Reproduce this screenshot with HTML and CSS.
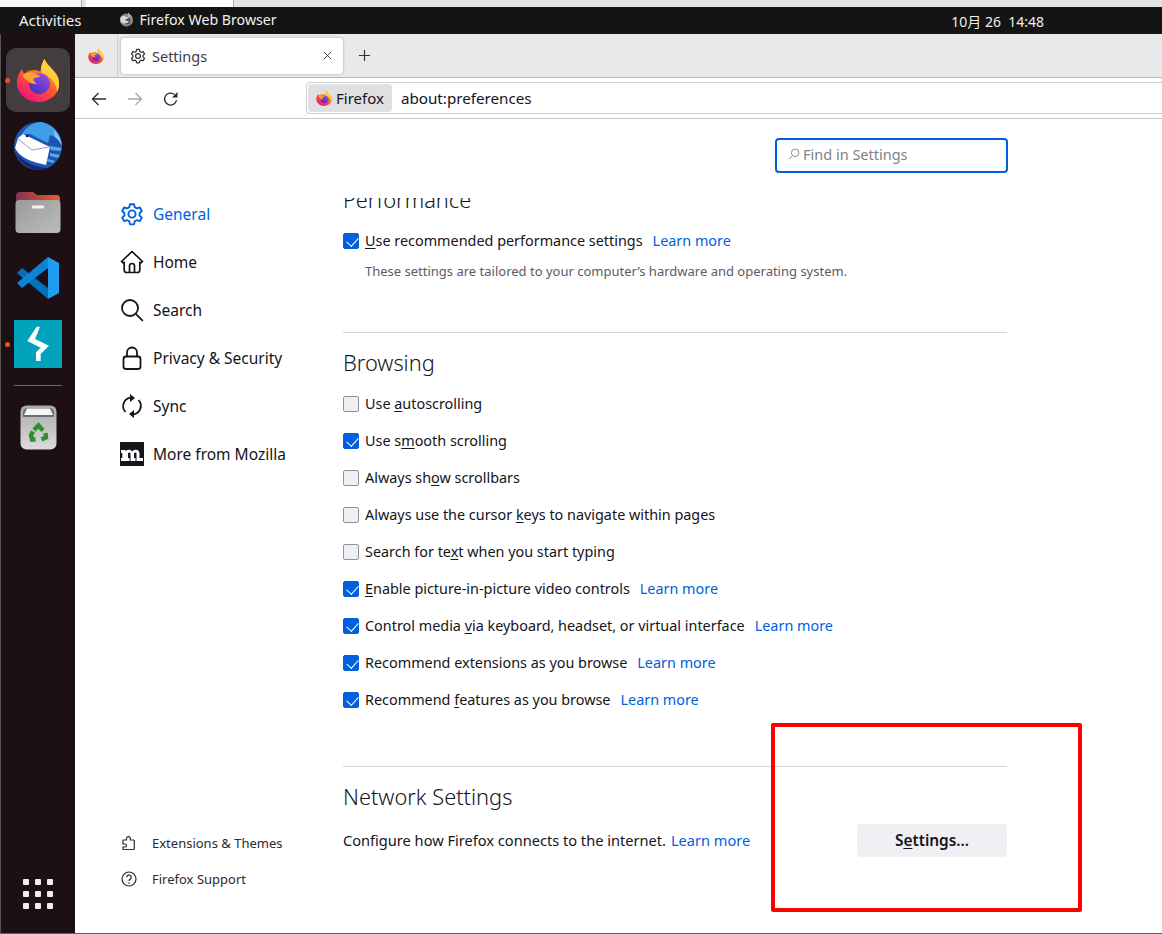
FILE: index.html
```html
<!DOCTYPE html>
<html lang="en">
<head>
<meta charset="utf-8">
<title>Settings</title>
<link rel="stylesheet" href="styles.css">
</head>
<body>
<svg class="defs" width="0" height="0" aria-hidden="true">
  <defs>
    <linearGradient id="fxBody" x1="0.8" y1="0.1" x2="0.25" y2="0.95">
      <stop offset="0" stop-color="#ffb325"/><stop offset="0.5" stop-color="#ff5a2c"/><stop offset="1" stop-color="#f0127c"/>
    </linearGradient>
    <linearGradient id="fxGlobe" x1="0.8" y1="0" x2="0.2" y2="1">
      <stop offset="0" stop-color="#a04be8"/><stop offset="1" stop-color="#3f2fb8"/>
    </linearGradient>
    <linearGradient id="folderTop" x1="0" y1="0" x2="1" y2="0">
      <stop offset="0" stop-color="#84324f"/><stop offset="1" stop-color="#e0602a"/>
    </linearGradient>
    <linearGradient id="folderBody" x1="0" y1="0" x2="1" y2="1">
      <stop offset="0" stop-color="#9a9a9a"/><stop offset="1" stop-color="#bcbcbc"/>
    </linearGradient>
    <linearGradient id="trashBody" x1="0" y1="0" x2="0" y2="1">
      <stop offset="0" stop-color="#a9a9a9"/><stop offset="1" stop-color="#dcdcdc"/>
    </linearGradient>
    <symbol id="firefox" viewBox="0 0 48 48">
      <path fill="url(#fxBody)" d="M31 1c2 5 6 8 10 13 4 4 6 9 6 14 0 11-10 20-23 20C11 48 1 38 1 27c0-5 2-11 6-15 0 2 1 4 2 5 3-3 7-4 11-4 3 0 5 1 7 2 0-6 2-11 4-14z"/>
      <path fill="#ffcf3a" d="M31 1c2 5 6 8 10 13 4 4 6 9 6 14 0 3-1 6-2 9-1-9-6-15-13-19-2-1-4-2-5-3 0-6 2-11 4-14z"/>
      <circle cx="25.500" cy="28" r="11.500" fill="url(#fxGlobe)"/>
      <path fill="#ffa030" d="M7 19c3-3 8-4 12-3 3 1 5 3 8 3-2 2-5 2.500-8 3 0 3 2 5 4 6-5 1-9-1-11-4-2-1-4-3-5-5z"/>
    </symbol>
    <symbol id="gear" viewBox="0 0 24 24">
      <path fill="none" stroke="currentColor" stroke-width="1.900" stroke-linejoin="round" d="M10 2.200h4l.7 3 2.100 1.200 3-.9 2 3.500-2.200 2.100v2.400l2.200 2.100-2 3.500-3-.9-2.100 1.200-.7 3h-4l-.7-3-2.100-1.200-3 .9-2-3.500 2.200-2.100v-2.400L2.200 9l2-3.500 3 .9 2.100-1.200z"/>
      <circle cx="12" cy="12" r="3.600" fill="none" stroke="currentColor" stroke-width="1.900"/>
    </symbol>
  </defs>
</svg>

<div class="strip">
  <div class="strip-tab-a"></div>
  <div class="strip-tab-b"></div>
</div>

<header class="topbar">
  <span class="activities">Activities</span>
  <span class="appname">
    <svg class="app-ico" viewBox="0 0 16 16"><circle cx="8" cy="8.500" r="7" fill="#8c8c8c"/><path fill="#b5b5b5" d="M10 0c.5 2 2 3 3.500 4.500L9 6.500z"/><circle cx="8.500" cy="9.500" r="3.600" fill="#4a4a4a"/><path fill="#d8d8d8" d="M1.500 6c2-2 4-2 6-1 1 .6 2 1 3 .8-1 1.600-3 1.800-4 2.200 1 1.500 3 2 4.500 1.500C9 13 3.500 13 2 10 1.500 9 1.400 7.500 1.500 6z"/></svg>
    <span>Firefox Web Browser</span>
  </span>
  <span class="clock">10月 26&nbsp; 14:48</span>
</header>

<div class="desktop">
  <aside class="dock">
    <div class="dock-item dock-active">
      <span class="run-dot"></span>
      <svg class="dock-fx"><use href="#firefox"/></svg>
    </div>
    <div class="dock-item">
      <svg class="dock-ico" viewBox="0 0 48 48">
        <circle cx="24" cy="24" r="24" fill="#1c55b4"/>
        <path fill="#3f9ee6" d="M8 12C12 5 18 1 26 0c12 1 21 11 22 24-3-6-7-10-12-11l-2 8L16 12z"/>
        <path fill="#86c8f2" d="M40 8c4 4 7 10 8 16-2-4-4-7-7-9z"/>
        <path fill="#5fa8e6" d="M36 24l12 2-2 3-9-1zM36 31l10 2-2 3-8-2zM34 37l7 2-2 2-6-2z"/>
        <path fill="#16276e" d="M1 30c4 10 13 18 25 18 3 0 6-1 8-2-11 0-24-5-33-16z"/>
        <path fill="#fff" d="M4 16l5-4 27 13-4 18C18 40 6 36 1 26z"/>
        <path fill="none" stroke="#9a9ea8" stroke-width="1" d="M4 17l14 11 17-3"/>
        <circle cx="13" cy="14" r="1.300" fill="#12224f"/>
      </svg>
    </div>
    <div class="dock-item">
      <svg class="dock-ico files" viewBox="0 0 46 42">
        <path fill="url(#folderTop)" d="M1 5q0-4 4-4h13l4 3h20q3 0 3 4v10H1z"/>
        <rect x="0.500" y="9" width="45" height="33" rx="4" fill="url(#folderBody)"/>
        <rect x="17" y="14.500" width="12" height="3" rx="1" fill="#f2f2f2"/>
      </svg>
    </div>
    <div class="dock-item">
      <svg class="dock-ico vscode" viewBox="0 0 44 44">
        <path fill="#0071bd" d="M1 17l5-5 26 20v11z"/>
        <path fill="#0a84d6" d="M32 1v11L6 32l-5-5z"/>
        <path fill="#1f9cf0" d="M32 1l11 6v30l-11 6z"/>
      </svg>
    </div>
    <div class="dock-item">
      <span class="run-dot"></span>
      <svg class="dock-ico bolt" viewBox="0 0 48 48">
        <rect width="48" height="48" fill="#00a3bb"/>
        <path fill="#fff" d="M22.700 6.700H26L21 19l14 6.700-8.300 8.300v7H22v-8.700l4.700-4.600-13.400-6.700z"/>
      </svg>
    </div>
    <div class="dock-sep"></div>
    <div class="dock-item trash-item">
      <svg class="dock-trash" viewBox="0 0 37 45">
        <rect x="0.500" y="0.500" width="36" height="44" rx="6" fill="url(#trashBody)"/>
        <path fill="#6e6e6e" d="M3 8q0-5 5-5h21q5 0 5 5v4H3z"/>
        <path fill="#f5f5f5" d="M7 3.500h23l3 6.500H4z"/>
        <path fill="none" stroke="#2f8f2f" stroke-width="4.400" d="M14 25l4.500-4.500 4.500 5M25.500 28l.5 4.500-4.500 2M15.500 34.500H12l-1-4.500 2-3.500"/>
      </svg>
    </div>
    <div class="dock-grid">
      <i></i><i></i><i></i><i></i><i></i><i></i><i></i><i></i><i></i>
    </div>
  </aside>

  <main class="browser">
    <div class="tabbar">
      <div class="pinned"><svg class="fx16"><use href="#firefox"/></svg></div>
      <div class="tab">
        <svg class="tab-gear"><use href="#gear"/></svg>
        <span class="tab-title">Settings</span>
        <svg class="tab-close" viewBox="0 0 10 10"><path d="M1 1l8 8M9 1l-8 8" stroke="#444" stroke-width="1.100"/></svg>
      </div>
      <svg class="newtab" viewBox="0 0 14 14"><path d="M7 1v12M1 7h12" stroke="#333" stroke-width="1.300"/></svg>
    </div>

    <div class="toolbar">
      <svg class="nav-ico" viewBox="0 0 16 16"><path fill="none" stroke="#2b2a33" stroke-width="1.300" d="M15 8H1.500M7.500 2l-6 6 6 6"/></svg>
      <svg class="nav-ico dim" viewBox="0 0 16 16"><path fill="none" stroke="#a8a8ac" stroke-width="1.300" d="M1 8h13.500M8.500 2l6 6-6 6"/></svg>
      <svg class="nav-ico" viewBox="0 0 16 16"><path fill="none" stroke="#2b2a33" stroke-width="1.300" d="M13.500 9a6 6 0 1 1-2-5.500"/><path fill="#2b2a33" d="M14.500 1v5.500H9z"/></svg>
      <div class="urlbar">
        <span class="identity"><svg class="fx16"><use href="#firefox"/></svg>Firefox</span>
        <span class="url">about:preferences</span>
      </div>
    </div>

    <div class="page">
      <nav class="side">
        <ul class="cats">
          <li class="cat selected"><svg class="cat-ico"><use href="#gear"/></svg>General</li>
          <li class="cat"><svg class="cat-ico" viewBox="0 0 24 24"><path fill="none" stroke="currentColor" stroke-width="1.700" stroke-linejoin="round" d="M1.500 11.500L12 1.500l10.500 10-2 1.500-.7-.7V20a2.500 2.500 0 0 1-2.500 2.500H6.700A2.500 2.500 0 0 1 4.200 20v-7.700l-.7.700zM9.500 22.500V16a2.500 2.500 0 0 1 5 0v6.500"/></svg>Home</li>
          <li class="cat"><svg class="cat-ico" viewBox="0 0 24 24"><circle cx="10" cy="10" r="8" fill="none" stroke="currentColor" stroke-width="1.800"/><path d="M15.800 15.800l7 7" stroke="currentColor" stroke-width="1.800"/></svg>Search</li>
          <li class="cat"><svg class="cat-ico" viewBox="0 0 24 24"><rect x="3.500" y="10.500" width="17" height="12.500" rx="2.500" fill="none" stroke="currentColor" stroke-width="1.800"/><path fill="none" stroke="currentColor" stroke-width="1.800" d="M7 10.500V6.500a5 5 0 0 1 10 0v4"/></svg>Privacy &amp; Security</li>
          <li class="cat"><svg class="cat-ico" viewBox="0 0 24 24"><path fill="none" stroke="currentColor" stroke-width="1.800" d="M5.500 18A8.500 8.500 0 0 1 11 3.700M18.500 6A8.500 8.500 0 0 1 13 20.300"/><path fill="currentColor" d="M10 0l5 4-5 4zM14 16l-5 4 5 4z"/></svg>Sync</li>
          <li class="cat"><svg class="cat-ico" viewBox="0 0 24 24"><rect width="24" height="24" fill="#15141a"/><path fill="#fff" d="M1 8h4.500v1.200C6.500 8.200 7.800 7.700 9 7.700c1.300 0 2.400.6 3 1.700 1.100-1.100 2.500-1.700 3.800-1.700 2.300 0 3.700 1.400 3.700 3.800V16H23v3h-6.500v-7c0-.9-.4-1.400-1.100-1.400-.5 0-1 .2-1.400.6V16h1.500v3h-5v-7c0-.9-.4-1.400-1.100-1.400-.5 0-1 .2-1.400.6V16H9.500v3H1v-3h1.300v-5H1z"/></svg>More from Mozilla</li>
        </ul>
        <ul class="links">
          <li class="link"><svg class="link-ico" viewBox="0 0 16 16"><path fill="none" stroke="currentColor" stroke-width="1.200" stroke-linejoin="round" d="M2 5h3.500V3.500a2 2 0 0 1 2-1.800c1 0 1.800 1 1.800 1.800V5h3a1 1 0 0 1 1 1v7.500a1 1 0 0 1-1 1H2V12h2a1.300 1.300 0 0 0 0-3H2z"/></svg>Extensions &amp; Themes</li>
          <li class="link"><svg class="link-ico" viewBox="0 0 16 16"><circle cx="8" cy="8" r="7" fill="none" stroke="currentColor" stroke-width="1.200"/><path fill="none" stroke="currentColor" stroke-width="1.200" d="M5.800 6.300a2.200 2.200 0 1 1 3.400 1.800c-.8.500-1.200 1-1.200 1.900"/><circle cx="8" cy="12" r=".8" fill="currentColor"/></svg>Firefox Support</li>
        </ul>
      </nav>

      <section class="content">
        <div class="search-row">
          <div class="search">
            <svg class="search-ico" viewBox="0 0 12 12"><circle cx="7.200" cy="4.800" r="3.800" fill="none" stroke="#8f8f9d" stroke-width="1"/><path d="M4.500 7.500L1 11" stroke="#8f8f9d" stroke-width="1"/></svg>
            <span>Find in Settings</span>
          </div>
        </div>
        <div class="scroller">
          <h2 class="clipped">Performance</h2>
          <label class="row"><span class="cb on"></span><span><u>U</u>se recommended performance settings</span><a class="more">Learn more</a></label>
          <p class="note">These settings are tailored to your computer’s hardware and operating system.</p>
          <hr class="sep first-sep">
          <h2>Browsing</h2>
          <div class="rows">
            <label class="row"><span class="cb"></span><span>Use <u>a</u>utoscrolling</span></label>
            <label class="row"><span class="cb on"></span><span>Use s<u>m</u>ooth scrolling</span></label>
            <label class="row"><span class="cb"></span><span>Always sh<u>o</u>w scrollbars</span></label>
            <label class="row"><span class="cb"></span><span>Always use the cursor <u>k</u>eys to navigate within pages</span></label>
            <label class="row"><span class="cb"></span><span>Search for te<u>x</u>t when you start typing</span></label>
            <label class="row"><span class="cb on"></span><span><u>E</u>nable picture-in-picture video controls</span><a class="more">Learn more</a></label>
            <label class="row"><span class="cb on"></span><span>Control media <u>v</u>ia keyboard, headset, or virtual interface</span><a class="more">Learn more</a></label>
            <label class="row"><span class="cb on"></span><span>Recommend extensions as you browse</span><a class="more">Learn more</a></label>
            <label class="row"><span class="cb on"></span><span>Recommend <u>f</u>eatures as you browse</span><a class="more">Learn more</a></label>
          </div>
          <hr class="sep net-sep">
          <h2>Network Settings</h2>
          <div class="net">
            <span class="net-text">Configure how Firefox connects to the internet.<a class="more net-more">Learn more</a></span>
            <button class="btn" type="button">S<u>e</u>ttings…</button>
          </div>
        </div>
      </section>
    </div>
  </main>
</div>
<div class="annotation"></div>
</body>
</html>
```
FILE: styles.css
```css
* { box-sizing: border-box; }
html, body { margin: 0; height: 100%; }
body {
  width: 1162px; height: 934px; overflow: hidden; position: relative;
  display: flex; flex-direction: column;
  background: #fff; color: #15141a;
  font-family: "Noto Sans", "Noto Sans CJK SC", sans-serif; font-size: 15px;
}
.defs { position: absolute; }
ul { list-style: none; margin: 0; padding: 0; }
u { text-underline-offset: 2px; text-decoration-thickness: 1px; }

.strip { height: 7px; background: #e4e4e7; display: flex; flex: none; }
.strip-tab-a { width: 82px; background: #f6f6f6; border-right: 1px solid #aaa; }
.strip-tab-b { width: 148px; margin-left: 4px; background: #fff; border-right: 1px solid #aaa; }

.topbar {
  height: 27px; flex: none; background: #141414; color: #f0f0f0;
  display: flex; align-items: center; font-size: 14.200px; position: relative;
}
.activities { margin: 0 0 2px 19px; font-size: 15px; }
.appname { margin: 0 0 2px 37px; display: flex; align-items: center; gap: 6px; }
.app-ico { width: 15px; height: 15px; }
.clock { margin-left: auto; margin-right: 118px; font-size: 14px; }

.desktop { flex: 1; display: flex; min-height: 0; border-left: 1px solid #555; border-bottom: 1px solid #5e5e5e; }

.dock {
  width: 74px; flex: none; background: #1d1015;
  display: flex; flex-direction: column; align-items: center; padding-top: 14px;
}
.dock-item { width: 64px; height: 64px; display: flex; align-items: center; justify-content: center; position: relative; border-radius: 10px; margin-bottom: 2px; flex: none; }
.dock-active { background: #443d40; }
.run-dot { position: absolute; left: -1px; top: 30px; width: 5px; height: 5px; border-radius: 50%; background: #e95420; }
.dock-fx { width: 44px; height: 44px; }
.dock-ico { width: 48px; height: 48px; }
.files { width: 46px; height: 42px; }
.vscode { width: 44px; height: 44px; }
.dock-sep { width: 48px; height: 1px; background: #6b6468; margin: 7px 0 11px; flex: none; }
.trash-item { height: 60px; }
.dock-trash { width: 37px; height: 45px; }
.dock-grid { margin-top: auto; margin-bottom: 24px; display: grid; grid-template-columns: repeat(3, 6px); gap: 6px; }
.dock-grid i { width: 6px; height: 6px; background: #f0eef0; border-radius: 1px; }

.browser { flex: 1; min-width: 0; display: flex; flex-direction: column; }

.tabbar { height: 44px; flex: none; background: #e9e9eb; border-bottom: 1px solid #b5b5b5; display: flex; align-items: center; }
.pinned { width: 43px; height: 43px; border-right: 1px solid #cfcfd4; display: flex; align-items: center; justify-content: center; }
.fx16 { width: 16px; height: 16px; flex: none; }
.tab {
  margin-left: 3px; width: 222px; height: 36px; background: #fff; border-radius: 4px;
  box-shadow: 0 0 3px rgba(0,0,0,.25); display: flex; align-items: center; padding: 0 11px 0 9px; font-size: 14.500px;
}
.tab-gear { width: 16px; height: 16px; color: #333; flex: none; }
.tab-title { margin-left: 6px; flex: 1; color: #3d3d44; }
.tab-close { width: 9px; height: 9px; }
.newtab { width: 13px; height: 13px; margin-left: 15px; }

.toolbar { height: 41px; flex: none; background: #fff; border-bottom: 1px solid #c8c8c8; display: flex; align-items: center; padding-left: 16px; }
.nav-ico { width: 16px; height: 16px; margin: 2px 20px 0 0; flex: none; }
.nav-ico:nth-child(3) { margin-right: 0; }
.urlbar {
  margin-left: 127px; flex: 1; height: 32px; border: 1px solid #cfcfd4; border-right: 0; border-radius: 4px 0 0 4px;
  display: flex; align-items: center; font-size: 15px; padding-left: 1px;
}
.identity { background: #e0e0e2; height: 28px; border-radius: 4px; display: flex; align-items: center; gap: 4px; padding: 0 8px 0 8px; color: #15141a; }
.url { margin-left: 9px; color: #15141a; font-size: 15.200px; }

.page { flex: 1; min-height: 0; display: flex; }
.side { width: 268px; flex: none; display: flex; flex-direction: column; padding: 71px 0 0 45px; }
.cats { display: flex; flex-direction: column; }
.cat { height: 48px; display: flex; align-items: center; gap: 9px; font-size: 15.500px; color: #15141a; margin-top: -0.500px; margin-bottom: 0.500px; }
.cat.selected { color: #0060df; }
.cat-ico { width: 24px; height: 24px; flex: none; }
.links { margin-top: auto; margin-bottom: 36px; padding-left: 1px; display: flex; flex-direction: column; }
.link { height: 36px; display: flex; align-items: center; gap: 15px; font-size: 13px; color: #2b2a33; }
.link-ico { width: 16px; height: 16px; flex: none; }

.content { width: 664px; flex: none; display: flex; flex-direction: column; min-height: 0; }
.search-row { height: 79px; flex: none; display: flex; justify-content: flex-end; padding-top: 19px; margin-right: -1px; }
.search {
  width: 233px; height: 35px; border: 2px solid #0060df; border-radius: 4px;
  display: flex; align-items: center; gap: 3px; padding: 0 0 4px 11px; color: #7f7f89; font-size: 14.500px;
}
.search-ico { width: 12px; height: 12px; }
.scroller { flex: 1; overflow: hidden; min-height: 0; }

h2 { font-weight: 300; font-size: 21.800px; line-height: 30px; margin: 0; color: #15141a; }
.clipped { margin-top: -13px; margin-bottom: 7px; height: 30px; }
.row { height: 37px; display: flex; align-items: center; font-size: 14.400px; color: #15141a; }
.cb { width: 16px; height: 16px; margin-right: 6px; border: 1px solid #8f8f9d; border-radius: 2px; background: #f0f0f4; flex: none; position: relative; }
.cb.on { background: #0060df; border-color: #0060df; }
.cb.on::after { content: ""; position: absolute; left: 4.500px; top: 1px; width: 6px; height: 10px; border: solid #fff; border-width: 0 1.400px 1.400px 0; transform: rotate(42deg); }
.more { color: #0060df; margin-left: 10px; }
.note { margin: 4px 0 0; padding-left: 22px; font-size: 13px; color: #5b5b66; line-height: 17px; }
.sep { margin: 0; border: 0; border-top: 1px solid #d7d7db; }
.first-sep { margin-top: 52px; margin-bottom: 15px; }
.rows { margin-top: 7px; }
.net-sep { margin-top: 48px; margin-bottom: 15px; }
.net { display: flex; align-items: center; justify-content: space-between; margin-top: 12px; font-size: 14.600px; }
.net-text { margin-bottom: 2px; }
.net-more { margin-left: 5px; }
.btn {
  width: 150px; height: 33px; border: 0; border-radius: 4px; background: #f0f0f4;
  font: 600 15.400px "Noto Sans", sans-serif; color: #15141a;
}

.annotation {
  position: absolute; left: 771px; top: 723px; width: 311px; height: 189px;
  border: 4px solid #ff0000; border-radius: 2px; pointer-events: none;
}
```
